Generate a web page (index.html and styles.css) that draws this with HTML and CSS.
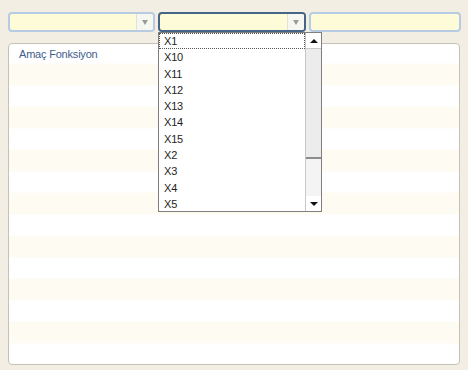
FILE: index.html
```html
<!DOCTYPE html>
<html lang="tr">
<head>
  <meta charset="UTF-8" />
  <title>Amaç Fonksiyon</title>
  <link rel="stylesheet" href="styles.css">
</head>
<body>

<div class="toolbar">
  <div class="combo combo-first">
    <div class="combo-input"></div>
    <div class="combo-arrow"><span class="tri-down"></span></div>
  </div>
  <div class="combo combo-focus">
    <div class="combo-input"></div>
    <div class="combo-arrow"><span class="tri-down"></span></div>
  </div>
  <div class="combo combo-last">
    <div class="combo-input"></div>
  </div>
</div>

<div class="panel">
  <div class="panel-title">Amaç Fonksiyon</div>
</div>

<!-- açılır liste -->
<div class="dropdown">
  <ul class="dropdown-items">
    <li class="selected">X1</li>
    <li>X10</li>
    <li>X11</li>
    <li>X12</li>
    <li>X13</li>
    <li>X14</li>
    <li>X15</li>
    <li>X2</li>
    <li>X3</li>
    <li>X4</li>
    <li>X5</li>
  </ul>
  <div class="scrollbar">
    <div class="scroll-btn"><span class="tri-up"></span></div>
    <div class="scroll-thumb"></div>
    <div class="scroll-track"></div>
    <div class="scroll-btn"><span class="tri-down-dark"></span></div>
  </div>
</div>

</body>
</html>
```

FILE: styles.css
```css
body {
  margin: 0;
  padding: 0;
  font-family: 'Liberation Sans', Arial, sans-serif;
  font-size: 11px;
  letter-spacing: -0.2px;
  background-color: #f3eee3;
  color: #222;
  width: 468px;
  height: 370px;
  overflow: hidden;
}

.toolbar {
  display: flex;
  gap: 3px;
  padding: 12px 0 0 8px;
}

.combo {
  display: flex;
  height: 16px;
  border: 2px solid #b7cbe3;
  border-radius: 4px;
  background-color: #fefcd8;
  overflow: hidden;
}

.combo-first {
  width: 143px;
}

.combo-focus {
  width: 144px;
  border: 2px solid #456586;
}

.combo-last {
  width: 148px;
}

.combo-input {
  flex: 1;
}

.combo-arrow {
  width: 16px;
  border-left: 1px solid #e2e2d8;
  background-color: #f7f7f2;
  display: flex;
  justify-content: center;
  align-items: center;
}

.tri-down {
  width: 0;
  height: 0;
  border-left: 3px solid transparent;
  border-right: 3px solid transparent;
  border-top: 5px solid #9a9a9a;
}

.panel {
  margin: 11px 0 0 8px;
  width: 450px;
  height: 320px;
  border: 1px solid #c6c2b6;
  border-radius: 4px;
  background-color: #fff;
  background-image: repeating-linear-gradient(to bottom, #fff 0, #fff 21.5px, #fefbf3 21.5px, #fefbf3 43px);
  background-position: 0 -1.5px;
}

.panel-title {
  padding: 4px 0 0 10px;
  color: #3f5d8c;
}

/* açılır liste */
.dropdown {
  position: absolute;
  left: 158px;
  top: 32px;
  width: 162px;
  height: 178px;
  border: 1px solid #7f7f7f;
  background-color: #fff;
  display: flex;
}

.dropdown-items {
  list-style: none;
  margin: 0;
  padding: 0;
  flex: 1;
}

.dropdown-items li {
  height: 16.3px;
  line-height: 16px;
  padding-left: 5px;
  box-sizing: border-box;
  color: #1e1e1e;
}

.dropdown-items li.selected {
  border: 1px dotted #555;
  padding-left: 4px;
  line-height: 15px;
}

.scrollbar {
  width: 15px;
  border-left: 1px solid #c8c8c8;
  background-color: #f4f4f4;
  display: flex;
  flex-direction: column;
}

.scroll-btn {
  height: 15px;
  display: flex;
  justify-content: center;
  align-items: center;
  background-color: #fff;
}

.scroll-btn:first-child {
  border-bottom: 1px solid #c8c8c8;
}

.scroll-thumb {
  height: 108px;
  background-color: #ececec;
  border-bottom: 2px solid #8c8c8c;
}

.scroll-track {
  flex: 1;
}

.tri-up {
  width: 0;
  height: 0;
  border-left: 4px solid transparent;
  border-right: 4px solid transparent;
  border-bottom: 4px solid #111;
}

.tri-down-dark {
  width: 0;
  height: 0;
  border-left: 4px solid transparent;
  border-right: 4px solid transparent;
  border-top: 4px solid #111;
}
```
